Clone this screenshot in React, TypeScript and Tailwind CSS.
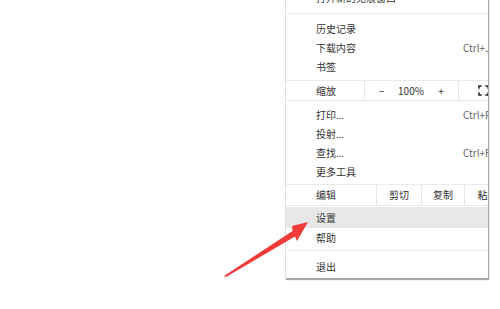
import React from 'react';

const font = { fontFamily: '"Noto Sans CJK SC", "Noto Sans", sans-serif' };

const Item = ({ label, shortcut }: { label: string; shortcut?: string }) => (
  <div className="flex h-[19px] items-center pl-[30px]">
    <span className="w-[147px] shrink-0 text-[#333]">{label}</span>
    {shortcut && <span className="text-[#666]">{shortcut}</span>}
  </div>
);

const Sep = () => <div className="h-px bg-[#e9e9e9]" />;

export default function App() {
  return (
    <div className="relative h-[309px] w-[500px] overflow-hidden bg-white text-[10px] leading-none" style={font}>
      <div className="flex pl-[285px]">
        {/* menu clipped at the right edge like the screenshot */}
        <div className="-mt-[13px] w-[203px] overflow-hidden border-l border-[#dedede] bg-white shadow-[1px_2px_1px_rgba(0,0,0,0.35)]">
          <div className="w-[260px]">
            <div className="h-[26px] pt-[1px]">
              <Item label="打开新的无痕窗口" />
            </div>
            <Sep />
            <div className="pt-[5px] pb-[4px]">
              <Item label="历史记录" />
              <Item label="下载内容" shortcut="Ctrl+J" />
              <Item label="书签" />
            </div>
            <Sep />
            <div className="flex h-[19px] items-center">
              <div className="flex h-full w-[79px] items-center border-r border-[#e6e6e6] pl-[30px] text-[#333]">缩放</div>
              <div className="flex h-full w-[94px] items-center border-r border-[#e6e6e6] text-[#333]">
                <span className="w-[33px] text-center">−</span>
                <span className="w-[26px] text-center">100%</span>
                <span className="w-[34px] text-center">+</span>
              </div>
              <div className="flex h-full items-center pl-[19px]">
                <svg width="11" height="11" viewBox="0 0 12 12" fill="none" stroke="#222" strokeWidth="1.6">
                  <path d="M1 4V1h3M8 1h3v3M11 8v3H8M4 11H1V8" />
                </svg>
              </div>
            </div>
            <Sep />
            <div className="pt-[4px] pb-[3px]">
              <Item label="打印..." shortcut="Ctrl+P" />
              <Item label="投射..." />
              <Item label="查找..." shortcut="Ctrl+F" />
              <Item label="更多工具" />
            </div>
            <Sep />
            <div className="flex h-[20px] items-center text-[#333]">
              <div className="flex h-full w-[91px] items-center border-r border-[#e6e6e6] pl-[30px]">编辑</div>
              <div className="flex h-full w-[45px] items-center justify-center border-r border-[#e6e6e6]">剪切</div>
              <div className="flex h-full w-[43px] items-center justify-center border-r border-[#e6e6e6]">复制</div>
              <div className="flex h-full w-[45px] items-center justify-center">粘贴</div>
            </div>
            <Sep />
            <div className="pt-[1px] pb-[2px]">
              <div className="flex h-[21px] items-center bg-[#e8e8e8] pl-[30px] text-[#333]">设置</div>
              <div className="flex h-[20px] items-center pl-[30px] text-[#333]">帮助</div>
            </div>
            <Sep />
            <div className="pt-[6px] pb-[1px]">
              <div className="flex h-[20px] items-center pl-[30px] text-[#333]">退出</div>
            </div>
          </div>
        </div>
      </div>

      {/* red arrow drawn over the page */}
      <svg className="pointer-events-none absolute left-0 top-0" width="500" height="309" viewBox="0 0 500 309">
        <polygon
          points="224,276 226,277 295,236.5 297,241 308,222 292,226 292.5,231"
          fill="#f23b3b"
        />
      </svg>
    </div>
  );
}
